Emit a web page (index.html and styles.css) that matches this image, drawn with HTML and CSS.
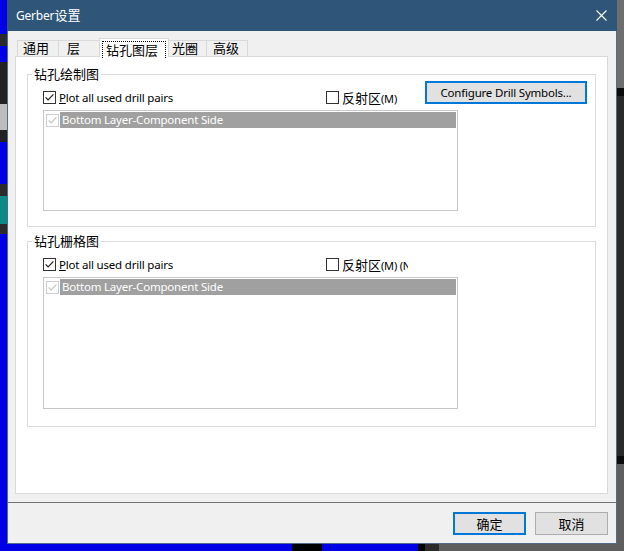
FILE: index.html
```html
<!DOCTYPE html>
<html lang="zh-CN">
<head>
<meta charset="utf-8">
<title>Gerber设置</title>
<link rel="stylesheet" href="styles.css">
</head>
<body>
<div class="screen">
  <div class="bg-left"></div>
  <div class="dialog">
    <div class="titlebar">
      <span class="title">Gerber<span class="zh">设置</span></span>
      <svg class="close" width="11" height="11" viewBox="0 0 11 11"><path d="M0.5 0.5 L10.5 10.5 M10.5 0.5 L0.5 10.5" stroke="#fff" stroke-width="1.1" fill="none"/></svg>
    </div>
    <div class="tabs">
      <div class="tab t1 zh">通用</div>
      <div class="tab t2 zh">层</div>
      <div class="tab t3 active zh"><span class="focus">钻孔图层</span></div>
      <div class="tab t4 zh">光圈</div>
      <div class="tab t5 zh">高级</div>
    </div>
    <div class="panel">
      <div class="group g1">
        <div class="legend zh">钻孔绘制图</div>
        <div class="row">
          <label class="cb-item first">
            <svg class="cb" width="13" height="13" viewBox="0 0 13 13"><rect x="0.5" y="0.5" width="12" height="12" fill="#fff" stroke="#333"/><path d="M2.6 6.4 L5.1 9 L10.4 3.4" fill="none" stroke="#222" stroke-width="1.2"/></svg>
            <span class="lbl"><u>P</u>lot all used drill pairs</span>
          </label>
          <label class="cb-item">
            <svg class="cb" width="13" height="13" viewBox="0 0 13 13"><rect x="0.5" y="0.5" width="12" height="12" fill="#fff" stroke="#333"/></svg>
            <span class="lbl"><span class="zh">反射区</span><span class="mn">(M)</span></span>
          </label>
          <button class="btn default cfg">Configure Drill Symbols...</button>
        </div>
        <div class="list l1">
          <div class="item">
            <svg class="cb" width="13" height="13" viewBox="0 0 13 13"><rect x="0.5" y="0.5" width="12" height="12" fill="#fff" stroke="#cfcfcf"/><path d="M2.6 6.4 L5.1 9 L10.4 3.4" fill="none" stroke="#c4c4c4" stroke-width="1.2"/></svg>
            <span class="sel">Bottom Layer-Component Side</span>
          </div>
        </div>
      </div>
      <div class="group g2">
        <div class="legend zh">钻孔栅格图</div>
        <div class="row">
          <label class="cb-item first">
            <svg class="cb" width="13" height="13" viewBox="0 0 13 13"><rect x="0.5" y="0.5" width="12" height="12" fill="#fff" stroke="#333"/><path d="M2.6 6.4 L5.1 9 L10.4 3.4" fill="none" stroke="#222" stroke-width="1.2"/></svg>
            <span class="lbl"><u>P</u>lot all used drill pairs</span>
          </label>
          <label class="cb-item">
            <svg class="cb" width="13" height="13" viewBox="0 0 13 13"><rect x="0.5" y="0.5" width="12" height="12" fill="#fff" stroke="#333"/></svg>
            <span class="lbl clip"><span class="zh">反射区</span><span class="mn">(M) (N)</span></span>
          </label>
        </div>
        <div class="list l2">
          <div class="item">
            <svg class="cb" width="13" height="13" viewBox="0 0 13 13"><rect x="0.5" y="0.5" width="12" height="12" fill="#fff" stroke="#cfcfcf"/><path d="M2.6 6.4 L5.1 9 L10.4 3.4" fill="none" stroke="#c4c4c4" stroke-width="1.2"/></svg>
            <span class="sel">Bottom Layer-Component Side</span>
          </div>
        </div>
      </div>
    </div>
    <div class="footer">
      <button class="btn default zh">确定</button>
      <button class="btn zh">取消</button>
    </div>
  </div>
  <div class="bg-right"></div>
  <div class="bg-bottom"></div>
</div>
</body>
</html>
```
FILE: styles.css
```css
* { box-sizing: border-box; }
html, body { margin: 0; padding: 0; }
body {
  width: 624px;
  height: 551px;
  overflow: hidden;
  font-family: "Noto Sans", "Noto Sans CJK SC", sans-serif;
  font-size: 11.5px;
  letter-spacing: -0.2px;
  color: #000;
  background: #0000e6;
}
.zh { font-family: "Noto Sans CJK SC", sans-serif; font-size: 13px; letter-spacing: 0; }

.screen {
  display: grid;
  grid-template-columns: 7px 610px 7px;
  grid-template-rows: 544px 7px;
  width: 624px;
  height: 551px;
}
.bg-left {
  background: linear-gradient(to bottom,
    #0000e6 0, #0000e6 34px,
    #2a2a2a 34px, #2a2a2a 46px,
    #0000e6 46px, #0000e6 62px,
    #222 62px, #222 104px,
    #bdbdbd 104px, #bdbdbd 130px,
    #222 130px, #222 142px,
    #0000e6 142px, #0000e6 184px,
    #2b2b2b 184px, #2b2b2b 196px,
    #0b8a88 196px, #0b8a88 224px,
    #2b2b2b 224px, #2b2b2b 234px,
    #0000e6 234px);
}
.bg-right {
  background: linear-gradient(to bottom,
    #6e6e6e 0, #6e6e6e 88px,
    #0c0c0c 88px, #0c0c0c 96px,
    #2a2a2a 96px, #2a2a2a 456px,
    #0c0c0c 456px, #0c0c0c 464px,
    #5f5f5f 464px);
}
.bg-bottom {
  grid-column: 1 / 4;
  background: linear-gradient(to right,
    #0000e6 0, #0000e6 292px,
    #000 292px, #000 322px,
    #0000e6 322px, #0000e6 418px,
    #000 418px, #000 425px,
    #2a2a2a 425px, #2a2a2a 439px,
    #5e5e5e 439px);
}

.dialog {
  background: #f0f0f0;
  border: 1px solid #4f6d8a;
  border-top: 0;
  display: flex;
  flex-direction: column;
}
.titlebar {
  height: 31px;
  background: #2f5678;
  color: #fff;
  display: flex;
  align-items: center;
  justify-content: space-between;
  margin: 0 -1px;
  padding: 0 10px 0 9px;
}
.title { font-size: 12px; line-height: 16px; }
.title .zh { font-size: 13px; }
.close { display: block; }

.tabs {
  display: flex;
  align-items: flex-end;
  height: 18px;
  margin-top: 7px;
  padding-left: 9px;
}
.tab {
  height: 16px;
  border: 1px solid #d9d9d9;
  border-bottom: 0;
  background: #f0f0f0;
  line-height: 14px;
  white-space: nowrap;
}
.t1 { width: 42px; padding-left: 5px; }
.t2 { width: 43px; margin-left: -1px; padding-left: 8px; }
.t3 { width: 70px; margin-left: -2px; }
.t4 { width: 39px; margin-left: -1px; padding-left: 3px; }
.t5 { width: 42px; margin-left: -1px; padding-left: 6px; }
.tab.active {
  height: 19px;
  margin-bottom: -1px;
  background: #fff;
  position: relative;
  z-index: 1;
  padding: 2px 2px 0 2px;
}
.focus {
  display: block;
  height: 17px;
  border: 1px dotted #000;
  border-bottom: 0;
  padding-left: 3px;
  line-height: 15px;
}

.panel {
  height: 438px;
  margin: 0 8px 0 7px;
  background: #fff;
  border: 1px solid #d9d9d9;
  padding-top: 17px;
}
.group {
  margin: 0 11px;
  border: 1px solid #dcdcdc;
}
.g1 { height: 153px; }
.g2 { height: 186px; margin-top: 14px; }
.legend {
  width: max-content;
  height: 14px;
  line-height: 14px;
  margin: -8px 0 0 4px;
  padding: 0 2px;
  background: #fff;
}
.row {
  display: flex;
  align-items: flex-end;
  height: 23px;
  padding-left: 15px;
}
.cb-item {
  display: flex;
  align-items: center;
  height: 13px;
}
.cb-item.first { width: 283px; }
.cb { display: block; flex: none; }
.lbl {
  margin-left: 3px;
  line-height: 13px;
  white-space: nowrap;
}
.lbl .zh { font-size: 13px; }
.mn { font-size: 11px; }
.clip { width: 66px; overflow: hidden; }

.btn {
  font-family: "Noto Sans", "Noto Sans CJK SC", sans-serif;
  font-size: 11.5px;
  letter-spacing: -0.2px;
  height: 23px;
  background: #e1e1e1;
  border: 1px solid #adadad;
  color: #000;
  padding: 0;
  line-height: 19px;
}
.btn.zh { font-family: "Noto Sans CJK SC", sans-serif; font-size: 13px; letter-spacing: 0; }
.btn.default { border: 2px solid #0078d7; }
.cfg { width: 162px; margin-left: auto; margin-right: 8px; }

.list {
  margin: 6px 0 0 15px;
  width: 415px;
  border: 1px solid #c8c8c8;
  padding: 1px;
  background: #fff;
}
.l1 { height: 101px; }
.l2 { height: 132px; }
.item {
  display: flex;
  align-items: center;
  height: 16px;
  padding-left: 1px;
}
.item .cb { margin-right: 1px; }
.sel {
  flex: 1;
  height: 16px;
  background: #a0a0a0;
  color: #fff;
  padding-left: 2px;
  line-height: 16px;
}

.footer {
  margin-top: 8px;
  border-top: 1px solid #737373;
  display: flex;
  justify-content: flex-end;
  gap: 9px;
  padding: 9px 8px 0 0;
}
.footer .btn { width: 73px; }
```
